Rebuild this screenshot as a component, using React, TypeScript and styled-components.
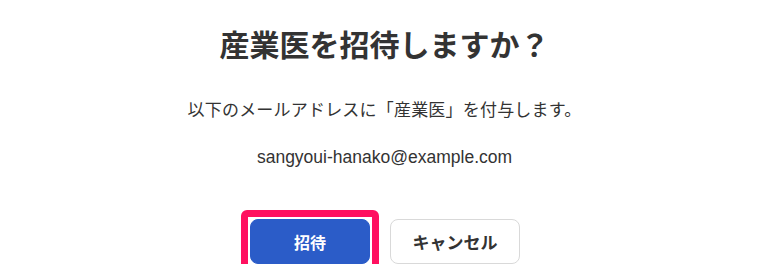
import React from 'react';
import styled, { createGlobalStyle } from 'styled-components';

const GlobalStyle = createGlobalStyle`
    body {
        margin: 0;
        background: #ffffff;
        font-family: "Liberation Sans", "Noto Sans CJK JP", sans-serif;
        color: #333333;
    }
`

const Dialog = styled.div`
    display: flex;
    flex-direction: column;
    align-items: center;
    padding-top: 23px;
    width: 769px;

    .dialog__title {
        margin: 0;
        font-family: "Noto Sans CJK JP", sans-serif;
        font-size: 30px;
        line-height: 40px;
        font-weight: 700;
        color: #333333;
    }

    .dialog__text {
        margin: 34px 0 0;
        font-family: "Noto Sans CJK JP", sans-serif;
        font-size: 17px;
        line-height: 24px;
        font-weight: 400;
        letter-spacing: 0.2px;
    }

    .dialog__mail {
        margin: 24px 0 0;
        font-family: "Liberation Sans", sans-serif;
        font-size: 17.5px;
        line-height: 24px;
    }
`

const Actions = styled.div`
    display: flex;
    gap: 20px;
    margin-top: 50px;
    padding-left: 1px;
`

const Button = styled.button<{ $primary?: boolean }>`
    position: relative;
    width: ${({ $primary }) => ($primary ? '120px' : '130px')};
    height: 45px;
    border-radius: 8px;
    border: 1px solid ${({ $primary }) => ($primary ? '#2b5cc8' : '#d9d9d9')};
    background: ${({ $primary }) => ($primary ? '#2b5cc8' : '#ffffff')};
    color: ${({ $primary }) => ($primary ? '#ffffff' : '#333333')};
    font-family: "Noto Sans CJK JP", sans-serif;
    font-size: ${({ $primary }) => ($primary ? '16px' : '17px')};
    font-weight: 700;
    cursor: pointer;
`

const Highlight = styled.span`
    position: absolute;
    top: -10px;
    left: -10px;
    right: -10px;
    bottom: -11px;
    border: 7px solid #ff1060;
    border-radius: 6px;
    pointer-events: none;
`

const App = () => {
  return (
    <>
      <GlobalStyle />
      <Dialog>
        <h1 className="dialog__title">産業医を招待しますか？</h1>
        <p className="dialog__text">以下のメールアドレスに「産業医」を付与します。</p>
        <p className="dialog__mail">sangyoui-hanako@example.com</p>
        <Actions>
          <Button $primary>
            招待
            <Highlight />
          </Button>
          <Button>キャンセル</Button>
        </Actions>
      </Dialog>
    </>
  );
}

export default App;
